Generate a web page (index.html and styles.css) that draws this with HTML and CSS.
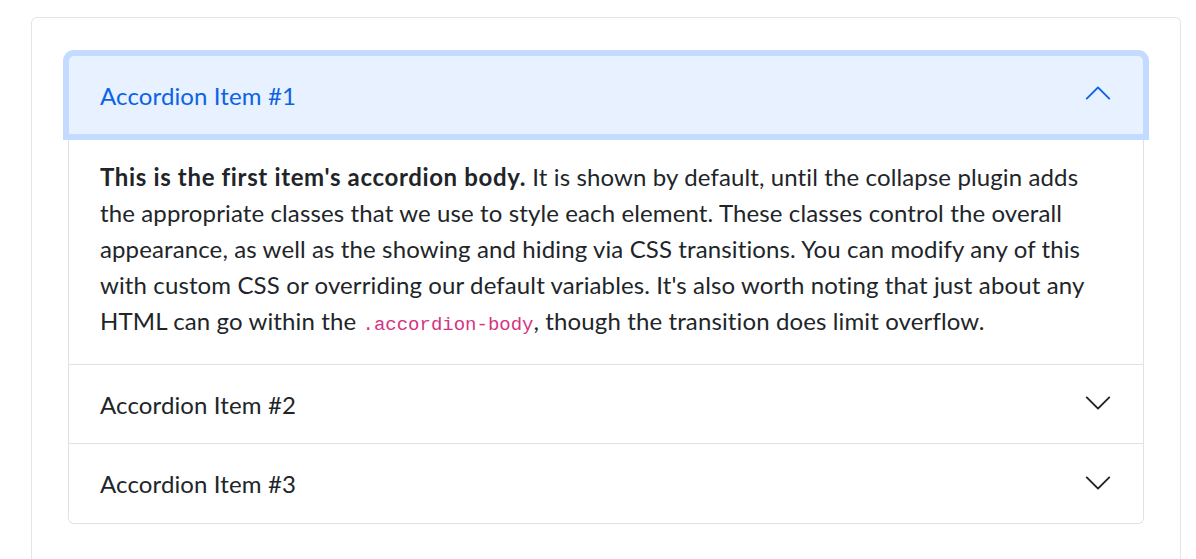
FILE: index.html
```html
<!DOCTYPE html>
<html lang="en">
<head>
<meta charset="utf-8">
<title>Accordion</title>
<link rel="stylesheet" href="styles.css">
</head>
<body>
<div class="card">
  <div class="accordion">
    <div class="accordion-item">
      <h2 class="accordion-header">
        <button class="accordion-button is-open is-focused" type="button">
          <span class="accordion-title">Accordion Item #1</span>
          <svg class="chevron chevron-up" viewBox="0 0 16 16" aria-hidden="true"><path fill-rule="evenodd" d="M1.646 4.646a.5.5 0 0 1 .708 0L8 10.293l5.646-5.647a.5.5 0 0 1 .708.708l-6 6a.5.5 0 0 1-.708 0l-6-6a.5.5 0 0 1 0-.708z"/></svg>
        </button>
      </h2>
      <div class="accordion-body">
        <strong>This is the first item's accordion body.</strong> It is shown by default, until the collapse plugin adds the appropriate classes that we use to style each element. These classes control the overall appearance, as well as the showing and hiding via CSS transitions. You can modify any of this with custom CSS or overriding our default variables. It's also worth noting that just about any HTML can go within the <code>.accordion-body</code>, though the transition does limit overflow.
      </div>
    </div>
    <div class="accordion-item">
      <h2 class="accordion-header">
        <button class="accordion-button" type="button">
          <span class="accordion-title">Accordion Item #2</span>
          <svg class="chevron" viewBox="0 0 16 16" aria-hidden="true"><path fill-rule="evenodd" d="M1.646 4.646a.5.5 0 0 1 .708 0L8 10.293l5.646-5.647a.5.5 0 0 1 .708.708l-6 6a.5.5 0 0 1-.708 0l-6-6a.5.5 0 0 1 0-.708z"/></svg>
        </button>
      </h2>
    </div>
    <div class="accordion-item">
      <h2 class="accordion-header">
        <button class="accordion-button" type="button">
          <span class="accordion-title">Accordion Item #3</span>
          <svg class="chevron" viewBox="0 0 16 16" aria-hidden="true"><path fill-rule="evenodd" d="M1.646 4.646a.5.5 0 0 1 .708 0L8 10.293l5.646-5.647a.5.5 0 0 1 .708.708l-6 6a.5.5 0 0 1-.708 0l-6-6a.5.5 0 0 1 0-.708z"/></svg>
        </button>
      </h2>
    </div>
  </div>
</div>
</body>
</html>
```
FILE: styles.css
```css
html, body {
  margin: 0;
  padding: 0;
  background: #fff;
}

body {
  font-family: Lato, "Noto Sans", sans-serif;
  font-size: 24px;
  line-height: 36px;
  color: #212529;
  overflow: hidden;
}

.card {
  margin: 17px 0 0 31px;
  width: 1150px;
  box-sizing: border-box;
  border: 1px solid #e3e5e8;
  border-bottom: 0;
  border-radius: 6px 6px 0 0;
  padding: 37px 36px 60px;
}

.accordion {
  width: 1076px;
}

.accordion-item {
  border: 1px solid #dee2e6;
  background: #fff;
}

.accordion-item + .accordion-item {
  border-top: 0;
}

.accordion-item:first-child {
  border-radius: 6px 6px 0 0;
}

.accordion-item:last-child {
  border-radius: 0 0 6px 6px;
}

.accordion-header {
  margin: 0;
  font-size: inherit;
  font-weight: 400;
}

.accordion-button {
  display: flex;
  align-items: center;
  width: 100%;
  box-sizing: border-box;
  height: 78px;
  padding: 0 30px 0 31px;
  margin: 0;
  border: 0;
  background: #fff;
  color: #212529;
  font: inherit;
  line-height: 36px;
  letter-spacing: 0.12px;
  text-align: left;
  cursor: pointer;
  position: relative;
}

.accordion-item:first-child .accordion-button {
  border-radius: 5px 5px 0 0;
}

.accordion-item:last-child .accordion-button {
  height: 79px;
  border-radius: 0 0 5px 5px;
}

.accordion-button.is-open {
  background: #e7f1ff;
  color: #0c63e4;
  border-radius: 5px 5px 0 0;
}

.accordion-button.is-focused {
  z-index: 3;
  box-shadow: 0 0 0 6px #c2dbfe;
}

.accordion-title {
  flex: 1;
  padding-top: 1px;
}

.chevron {
  width: 30px;
  height: 30px;
  flex-shrink: 0;
  fill: #212529;
  margin-top: -2px;
}

.chevron-up {
  fill: #0c63e4;
  transform: rotate(180deg);
  margin-top: -4px;
}

.accordion-body {
  padding: 25px 30px 25px 31px;
  letter-spacing: 0.12px;
}

.accordion-body strong {
  font-weight: 700;
  letter-spacing: 0.65px;
}

code {
  font-family: "Liberation Mono", "DejaVu Sans Mono", monospace;
  font-size: 19px;
  line-height: 1;
  letter-spacing: 0;
  color: #d63384;
}
```
